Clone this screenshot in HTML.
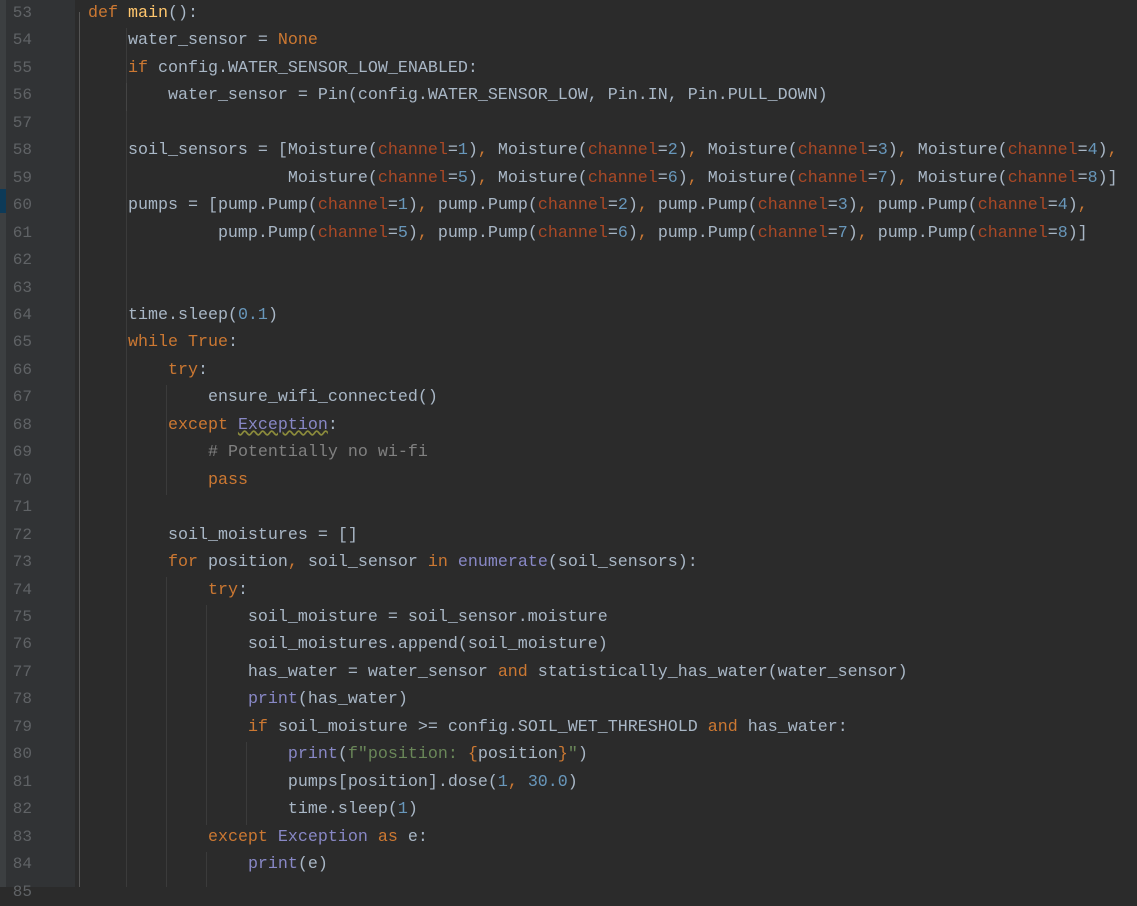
<!DOCTYPE html>
<html><head><meta charset="utf-8"><style>
html,body{margin:0;padding:0;width:1137px;height:887px;overflow:hidden;background:#2b2b2b}
.strip{position:absolute;left:0;top:0;width:6px;height:887px;background:#3c3f41}
.mark{position:absolute;left:0;top:189px;width:6px;height:24px;background:#0d3a58}
.gut{position:absolute;left:6px;top:0;width:69px;height:887px;background:#313335}
.nums{position:absolute;left:0;top:0;width:32px;text-align:right;font:16px/27.45px "Liberation Mono",monospace;color:#606366;margin:0}
.fold{position:absolute;left:79px;top:12px;width:1px;height:875px;background:#555}
.code{position:absolute;left:88px;top:0;margin:0;font:16.67px/27.45px "Liberation Mono",monospace;color:#a9b7c6;white-space:pre}
.k{color:#cc7832}.f{color:#ffc66d}.n{color:#6897bb}.p{color:#aa4926}.b{color:#8888c6}.c{color:#808080}.s{color:#6a8759}
.g{position:absolute;width:1px;background:#3b3b3b}
.u{text-decoration:underline wavy #8c8c3c}
</style></head><body>
<div class="strip"></div><div class="mark"></div><div class="gut"></div>
<pre class="nums">53
54
55
56
57
58
59
60
61
62
63
64
65
66
67
68
69
70
71
72
73
74
75
76
77
78
79
80
81
82
83
84
85</pre>
<div class="fold"></div>
<div class="g" style="left:126px;top:28px;height:859px"></div>
<div class="g" style="left:126px;top:83px;height:28px;background:#444"></div>
<div class="g" style="left:166px;top:385px;height:110px"></div>
<div class="g" style="left:166px;top:577px;height:310px"></div>
<div class="g" style="left:206px;top:605px;height:220px"></div>
<div class="g" style="left:206px;top:852px;height:35px"></div>
<div class="g" style="left:246px;top:742px;height:83px"></div>
<pre class="code"><span class="k">def </span><span class="f">main</span>():
    water_sensor = <span class="k">None</span>
    <span class="k">if </span>config.WATER_SENSOR_LOW_ENABLED:
        water_sensor = Pin(config.WATER_SENSOR_LOW, Pin.IN, Pin.PULL_DOWN)

    soil_sensors = [Moisture(<span class="p">channel</span>=<span class="n">1</span>)<span class="k">, </span>Moisture(<span class="p">channel</span>=<span class="n">2</span>)<span class="k">, </span>Moisture(<span class="p">channel</span>=<span class="n">3</span>)<span class="k">, </span>Moisture(<span class="p">channel</span>=<span class="n">4</span>)<span class="k">,</span>
                    Moisture(<span class="p">channel</span>=<span class="n">5</span>)<span class="k">, </span>Moisture(<span class="p">channel</span>=<span class="n">6</span>)<span class="k">, </span>Moisture(<span class="p">channel</span>=<span class="n">7</span>)<span class="k">, </span>Moisture(<span class="p">channel</span>=<span class="n">8</span>)]
    pumps = [pump.Pump(<span class="p">channel</span>=<span class="n">1</span>)<span class="k">, </span>pump.Pump(<span class="p">channel</span>=<span class="n">2</span>)<span class="k">, </span>pump.Pump(<span class="p">channel</span>=<span class="n">3</span>)<span class="k">, </span>pump.Pump(<span class="p">channel</span>=<span class="n">4</span>)<span class="k">,</span>
             pump.Pump(<span class="p">channel</span>=<span class="n">5</span>)<span class="k">, </span>pump.Pump(<span class="p">channel</span>=<span class="n">6</span>)<span class="k">, </span>pump.Pump(<span class="p">channel</span>=<span class="n">7</span>)<span class="k">, </span>pump.Pump(<span class="p">channel</span>=<span class="n">8</span>)]


    time.sleep(<span class="n">0.1</span>)
    <span class="k">while True</span>:
        <span class="k">try</span>:
            ensure_wifi_connected()
        <span class="k">except </span><span class="b u">Exception</span>:
            <span class="c"># Potentially no wi-fi</span>
            <span class="k">pass</span>

        soil_moistures = []
        <span class="k">for </span>position<span class="k">, </span>soil_sensor <span class="k">in </span><span class="b">enumerate</span>(soil_sensors):
            <span class="k">try</span>:
                soil_moisture = soil_sensor.moisture
                soil_moistures.append(soil_moisture)
                has_water = water_sensor <span class="k">and </span>statistically_has_water(water_sensor)
                <span class="b">print</span>(has_water)
                <span class="k">if </span>soil_moisture &gt;= config.SOIL_WET_THRESHOLD <span class="k">and </span>has_water:
                    <span class="b">print</span>(<span class="s">f"position: </span><span class="k">{</span>position<span class="k">}</span><span class="s">"</span>)
                    pumps[position].dose(<span class="n">1</span><span class="k">, </span><span class="n">30.0</span>)
                    time.sleep(<span class="n">1</span>)
            <span class="k">except </span><span class="b">Exception </span><span class="k">as </span>e:
                <span class="b">print</span>(e)
</pre>
</body></html>
